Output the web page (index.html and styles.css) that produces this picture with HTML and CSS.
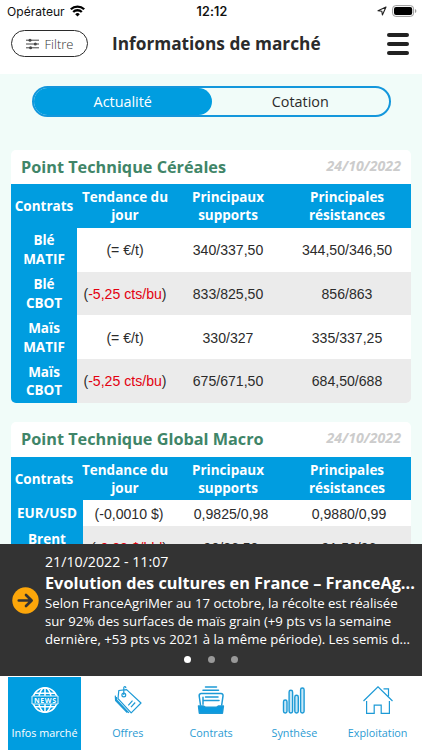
FILE: index.html
```html
<!DOCTYPE html>
<html lang="fr">
<head>
  <meta charset="UTF-8">
  <title>Informations de marché</title>
  <link rel="stylesheet" href="styles.css">
</head>
<body>
  <div class="status-bar">
    <div class="carrier">
      <span>Opérateur</span>
      <svg width="15" height="12" viewBox="0 0 15 12" fill="none" stroke="#000" stroke-width="2.3">
        <path d="M.8 4.3a9.6 9.6 0 0 1 13.4 0M3.2 7a6.1 6.1 0 0 1 8.6 0"/>
        <path d="M7.5 11.5L5.2 9.2a3.2 3.2 0 0 1 4.6 0z" fill="#000" stroke="none"/>
      </svg>
    </div>
    <div class="time">12:12</div>
    <div class="indicators">
      <svg width="10" height="10" viewBox="0 0 10 10" fill="none" stroke="#222" stroke-width="1.1" stroke-linejoin="round">
        <path d="M9 1L1 4.7l3.8.5L5.4 9z"/>
      </svg>
      <svg width="25" height="12" viewBox="0 0 25 12">
        <rect x=".6" y=".6" width="21" height="10.8" rx="3.2" fill="none" stroke="#999" stroke-width="1"/>
        <rect x="2" y="2" width="18.2" height="8" rx="2" fill="#000"/>
        <path d="M23 4v4q1.4-.7 1.4-2T23 4z" fill="#999"/>
      </svg>
    </div>
  </div>

  <header class="header">
    <button class="filter-btn">
      <svg width="13" height="12" viewBox="0 0 13 12" fill="none" stroke="#444" stroke-width="1">
        <path d="M0 2.2h13M0 6h13M0 9.8h13"/>
        <g fill="#444" stroke="none"><circle cx="4" cy="2.2" r="1.5"/><circle cx="9.3" cy="6" r="1.5"/><circle cx="4.6" cy="9.8" r="1.5"/></g>
      </svg>
      <span>Filtre</span>
    </button>
    <h1>Informations de marché</h1>
    <button class="menu-btn"><span></span><span></span><span></span></button>
  </header>

  <main class="content">
    <div class="switch">
      <div class="switch-item active">Actualité</div>
      <div class="switch-item">Cotation</div>
    </div>

    <section class="card">
      <div class="card-title">
        <h2>Point Technique Céréales</h2>
        <span class="date">24/10/2022</span>
      </div>
      <div class="row head">
        <div>Contrats</div><div>Tendance du jour</div><div>Principaux supports</div><div>Principales résistances</div>
      </div>
      <div class="row">
        <div class="name">Blé<br>MATIF</div><div>(= €/t)</div><div>340/337,50</div><div>344,50/346,50</div>
      </div>
      <div class="row grey">
        <div class="name">Blé<br>CBOT</div><div>(<span class="down">-5,25 cts/bu</span>)</div><div>833/825,50</div><div>856/863</div>
      </div>
      <div class="row">
        <div class="name">Maïs<br>MATIF</div><div>(= €/t)</div><div>330/327</div><div>335/337,25</div>
      </div>
      <div class="row grey">
        <div class="name">Maïs<br>CBOT</div><div>(<span class="down">-5,25 cts/bu</span>)</div><div>675/671,50</div><div>684,50/688</div>
      </div>
    </section>

    <section class="card macro">
      <div class="card-title">
        <h2>Point Technique Global Macro</h2>
        <span class="date">24/10/2022</span>
      </div>
      <div class="row head">
        <div>Contrats</div><div>Tendance du jour</div><div>Principaux supports</div><div>Principales résistances</div>
      </div>
      <div class="row short">
        <div class="name">EUR/USD</div><div>(-0,0010 $)</div><div>0,9825/0,98</div><div>0,9880/0,99</div>
      </div>
      <div class="row grey">
        <div class="name">Brent<br>NYMEX</div><div>(<span class="down">-0,88 $/bbl</span>)</div><div>90/86,50</div><div>91,50/96</div>
      </div>
    </section>
  </main>

  <section class="news">
    <svg class="news-arrow" width="27" height="27" viewBox="0 0 27 27">
      <circle cx="13.5" cy="13.5" r="13.2" fill="#fca60a"/>
      <path d="M6.8 13.5h12.5M14 8l5.6 5.5L14 19" fill="none" stroke="#333" stroke-width="2.7" stroke-linecap="round" stroke-linejoin="round"/>
    </svg>
    <div class="news-body">
      <div class="news-date">21/10/2022 - 11:07</div>
      <h3>Evolution des cultures en France – FranceAg...</h3>
      <p>Selon FranceAgriMer au 17 octobre, la récolte est réalisée<br>sur 92% des surfaces de maïs grain (+9 pts vs la semaine<br>dernière, +53 pts vs 2021 à la même période). Les semis d...</p>
    </div>
    <div class="dots"><i class="on"></i><i></i><i></i></div>
  </section>

  <nav class="tabs">
    <a class="tab active">
      <svg width="28" height="28" viewBox="0 0 28 28" fill="none" stroke="#fff" stroke-width="1.5">
        <circle cx="14" cy="14" r="12.2"/>
        <ellipse cx="14" cy="14" rx="6.3" ry="12.2"/>
        <path d="M14 1.8v24.4M4 7.2h20M4 20.8h20"/>
        <rect x=".8" y="9.8" width="26.4" height="8.4" fill="#009de0" stroke="none"/>
        <path d="M1 10h26M1 18h26M1 10v8M27 10v8" stroke-width=".9"/>
        <text x="14" y="16.7" class="globe-text" text-anchor="middle" textLength="22">NEWS</text>
      </svg>
      <span>Infos marché</span>
    </a>
    <a class="tab">
      <svg width="28" height="28" viewBox="0 0 28 28" fill="none" stroke="#1d9ad6" stroke-width="1.2" stroke-linejoin="round">
        <path d="M4.8 4.5L12.6 3.6 27 17 17.2 26.8 4 12.6z"/>
        <path d="M1.3 9.6l.3 5.1 11.6 12M2.4 11l.3 3 12.2 12.8"/>
        <circle cx="9.8" cy="9" r="1.9"/>
        <path d="M9.8 9V1.7c0-1.6 2.2-1.2 2 .4M14.3 19.4l4.2-4.7M17 21.2l4.2-4.7"/>
      </svg>
      <span>Offres</span>
    </a>
    <a class="tab">
      <svg width="28" height="28" viewBox="0 0 28 28" fill="none" stroke="#1d9ad6" stroke-width="1.5" stroke-linecap="round" stroke-linejoin="round">
        <path d="M8.5 1h11M6 4.2h15.5M4 7.6h20q2.3.2 2 2.4l-1.3 9M4 7.6Q2 8 2.2 10l1.3 9"/>
        <path d="M8.5 11h12.5M6.5 14.5h15.5M6 11.2v7"/>
        <path d="M1.5 20h5l1.8 1.2h11.5L21.4 20h5l-1 7.2h-23z" fill="#0b9be0"/>
      </svg>
      <span>Contrats</span>
    </a>
    <a class="tab">
      <svg width="28" height="28" viewBox="0 0 28 28" fill="#c9e8f7" stroke="#1d9ad6" stroke-width="1.4">
        <rect x="3.5" y="14" width="3.5" height="13" rx="1.7"/>
        <rect x="9.1" y="4.3" width="3.5" height="22.7" rx="1.7"/>
        <rect x="14.8" y="9.2" width="3.5" height="17.8" rx="1.7"/>
        <rect x="20.6" y="2" width="3.5" height="25" rx="1.7"/>
      </svg>
      <span>Synthèse</span>
    </a>
    <a class="tab">
      <svg width="30" height="28" viewBox="0 0 30 28" fill="none" stroke="#1d9ad6" stroke-width="1.2">
        <path d="M.5 15L15 .8 29.5 15M20.5 2.8h5v7.5"/>
        <path d="M3.6 15v12.4h7.6v-8.3h7v8.3h8.2V15"/>
      </svg>
      <span>Exploitation</span>
    </a>
  </nav>
</body>
</html>
```

FILE: styles.css
```css
* {
  box-sizing: border-box;
}

body {
  margin: 0;
  width: 422px;
  height: 750px;
  display: flex;
  flex-direction: column;
  overflow: hidden;
  background: white;
  color: #2b2b2b;
  font-family: 'Open Sans', sans-serif;
}

h1, h2, h3, p {
  margin: 0;
}

svg {
  display: block;
  flex: none;
}

button {
  background: none;
  border: none;
  padding: 0;
  font-family: inherit;
}

.status-bar {
  flex: none;
  height: 22px;
  display: grid;
  grid-template-columns: 1fr auto 1fr;
  align-items: center;
  padding: 0 5px 0 7px;
  font-family: Inter, sans-serif;
  font-size: 12.1px;
  color: #111;
}

.carrier {
  display: flex;
  align-items: center;
  gap: 5px;
}

.time {
  font-weight: 600;
  font-size: 12.5px;
  letter-spacing: 0.2px;
}

.indicators {
  display: flex;
  align-items: center;
  justify-content: flex-end;
  gap: 5px;
}

.header {
  flex: none;
  height: 52px;
  display: flex;
  align-items: center;
  padding: 0 13px 9px 11px;
}

.filter-btn {
  width: 77px;
  height: 27px;
  display: flex;
  align-items: center;
  justify-content: center;
  gap: 6px;
  border: 1px solid #2b2b2b;
  border-radius: 14px;
  font-size: 13px;
  font-weight: 300;
  color: #333;
}

.header h1 {
  margin-left: 24px;
  font-size: 17.25px;
  line-height: 24px;
  white-space: nowrap;
}

.menu-btn {
  margin-left: auto;
  width: 22px;
  height: 22px;
  display: flex;
  flex-direction: column;
  justify-content: space-between;
}

.menu-btn span {
  height: 4px;
  width: 22px;
  border-radius: 2px;
  background: #222;
}

.content {
  flex: 1;
  min-height: 0;
  overflow: hidden;
  background: #f1fcf9;
  padding: 12px 11px 0;
}

.switch {
  width: 359px;
  height: 31px;
  margin: 0 0 33px 21px;
  display: flex;
  border: 2px solid #1497dc;
  border-radius: 16px;
  overflow: hidden;
}

.switch-item {
  flex: 1;
  text-align: center;
  font-size: 14.4px;
  line-height: 28px;
}

.switch-item.active {
  background: #009de0;
  color: white;
  border-radius: 0 14px 14px 0;
}

.card {
  width: 400px;
  margin-bottom: 19px;
  border-radius: 5px;
  background: white;
  overflow: hidden;
}

.card-title {
  height: 34px;
  display: flex;
  justify-content: space-between;
  padding: 5px 10px 0;
}

.card-title h2 {
  font-size: 16.25px;
  line-height: 25px;
  color: #408568;
}

.date {
  font-size: 14.2px;
  line-height: 22px;
  font-weight: 700;
  font-style: italic;
  color: #ccc;
}

.row {
  display: grid;
  grid-template-columns: 66px 96px 110px 128px;
  height: 43.8px;
  font-family: 'Liberation Sans', sans-serif;
  font-size: 14.1px;
}

.row > div {
  display: flex;
  align-items: center;
  justify-content: center;
  text-align: center;
  line-height: 18.7px;
  padding-top: 1.5px;
}

.row.head > div,
.row > .name {
  background: #009de0;
  color: white;
  font-family: 'Open Sans', sans-serif;
  font-size: 13.5px;
  font-weight: 700;
  padding-top: 0.8px;
}

.row.head > div {
  padding: 1px 4px 0;
}

.row.head > div:first-child {
  padding: 1px 0 0;
}

.row.head > div:nth-child(3) {
  padding: 1px 15px 0;
}

.row.head > div:nth-child(4) {
  padding: 1px 20px 0;
}

.row.grey {
  background: #ebebeb;
}

.macro .card-title {
  height: 35px;
}

.macro .row.head {
  height: 43.5px;
}

.macro .row:not(.head) {
  grid-template-columns: 72px 92px 112px 124px;
}

.macro .row.short {
  height: 25.7px;
}

.down {
  color: #e3000f;
}

.news {
  flex: none;
  height: 132px;
  position: relative;
  display: flex;
  background: #333;
  color: white;
  padding: 8px 5px 0 12px;
}

.news-arrow {
  margin: 35px 6px 0 0;
}

.news-body {
  flex: 1;
  min-width: 0;
}

.news-date {
  font-size: 14.2px;
  line-height: 20px;
}

.news h3 {
  font-size: 16.3px;
  line-height: 22px;
  white-space: nowrap;
}

.news p {
  font-size: 13.2px;
  line-height: 18px;
  white-space: nowrap;
}

.dots {
  position: absolute;
  left: 184px;
  bottom: 13px;
  display: flex;
  gap: 16.5px;
}

.dots i {
  width: 7px;
  height: 7px;
  border-radius: 50%;
  background: #999;
}

.dots i.on {
  background: white;
}

.tabs {
  flex: none;
  height: 74px;
  display: grid;
  grid-template-columns: 73px repeat(4, 1fr);
  column-gap: 10.5px;
  padding: 1px 8px 0;
  background: white;
}

.tab {
  display: flex;
  flex-direction: column;
  align-items: center;
  padding-top: 9px;
  color: #2b9bd3;
  font-size: 10.8px;
}

.tab span {
  margin-top: 11px;
  line-height: 16px;
  white-space: nowrap;
}

.tab.active {
  background: #009de0;
  color: white;
}

.globe-text {
  font-size: 7px;
  font-weight: 700;
  fill: white;
  stroke: none;
}
```
